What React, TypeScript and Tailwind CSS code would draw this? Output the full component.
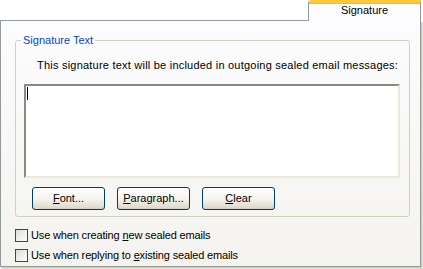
import React from 'react';

const font = { fontFamily: '"Liberation Sans", Arial, sans-serif' };

function XpButton({ label, accel }: { label: string; accel: number }) {
  return (
    <button className="w-[73px] h-[23px] rounded-[3px] border border-[#003c74] bg-gradient-to-b from-white via-[#f5f4ef] to-[#dcd8c9] text-[11px] leading-[13px] text-black shadow-[inset_0_-1px_0_#d6d0c5]">
      {label.slice(0, accel)}
      <span className="underline">{label[accel]}</span>
      {label.slice(accel + 1)}
    </button>
  );
}

function XpCheck({ before, accel, after }: { before: string; accel: string; after: string }) {
  return (
    <label className="flex items-center gap-[3px] h-[13px] text-[11px] leading-[13px] tracking-[-0.15px] text-black">
      <span className="w-[13px] h-[13px] border border-[#1c5180] bg-gradient-to-br from-[#dcdcd7] to-white" />
      <span>
        {before}
        <span className="underline">{accel}</span>
        {after}
      </span>
    </label>
  );
}

export default function App() {
  return (
    <div className="w-[423px] h-[269px] bg-white" style={font}>
      {/* tab strip */}
      <div className="flex h-[21px]">
        <div className="flex-1 border-b border-[#919b9c]" />
        <div className="w-[113px] h-[21px] bg-[#fcfcfe] border-l border-r border-[#919b9c] border-t-[3px] border-t-[#ffc83c] rounded-tl-[3px] shadow-[inset_0_1px_0_#f6b54a] flex justify-center">
          <span className="text-[11px] leading-[14px] text-black">Signature</span>
        </div>
        <div className="w-[2px] border-b border-transparent" />
      </div>

      {/* panel */}
      <div className="w-[421px] h-[246px] border-l border-r border-b border-[#919b9c] bg-gradient-to-b from-[#fcfcfe] to-[#f4f3ee] shadow-[1px_1px_0_#d0cebf,2px_2px_0_#e3e0d0] flex flex-col">
        <fieldset className="ml-[14px] mt-[12px] w-[395px] border border-[#d0d0bf] rounded-[3px] pb-[6px]">
          <legend className="ml-[5px] px-[2px] text-[11px] leading-[14px] text-[#0046d5]">Signature Text</legend>
          <p className="mt-[11px] pl-[21px] text-[11px] leading-[14px] tracking-[0.22px] text-black whitespace-nowrap">
            This signature text will be included in outgoing sealed email messages:
          </p>
          <div className="mt-[12px] ml-[8px] w-[376px] h-[94px] bg-white border-2 border-t-[#8c8a7e] border-l-[#8c8a7e] border-r-[#ece9d8] border-b-[#ece9d8] pt-[1px] pl-[1px]">
            <div className="w-[1px] h-[13px] bg-black" />
          </div>
          <div className="mt-[9px] ml-[16px] flex gap-[12px]">
            <XpButton label="Font..." accel={0} />
            <XpButton label="Paragraph..." accel={0} />
            <XpButton label="Clear" accel={0} />
          </div>
        </fieldset>

        <div className="ml-[14px] mt-[12px] flex flex-col gap-[7px]">
          <XpCheck before="Use when creating " accel="n" after="ew sealed emails" />
          <XpCheck before="Use when replying to " accel="e" after="xisting sealed emails" />
        </div>
      </div>
    </div>
  );
}
